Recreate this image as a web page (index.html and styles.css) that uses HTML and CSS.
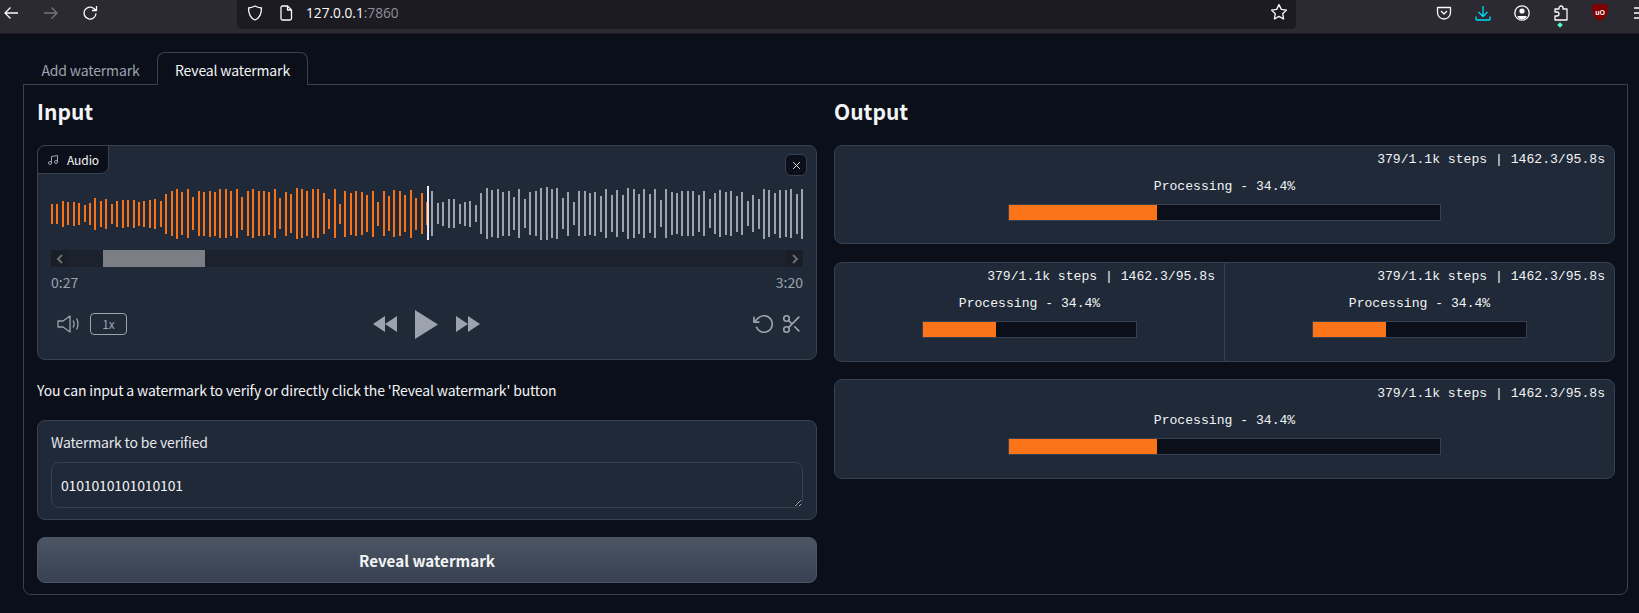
FILE: index.html
```html
<!DOCTYPE html>
<html lang="en">
<head>
<meta charset="utf-8">
<title>Watermark</title>
<link rel="stylesheet" href="styles.css">
</head>
<body>
<header class="toolbar">
  <svg class="tb-icon back" viewBox="0 0 16 16"><path d="M15 8H2M7.5 2.5 2 8l5.500 5.500"/></svg>
  <svg class="tb-icon forward" viewBox="0 0 16 16"><path d="M1 8h13M8.500 2.500 14 8l-5.500 5.500"/></svg>
  <svg class="tb-icon reload" viewBox="0 0 16 16"><path d="M14 8.500A6 6 0 1 1 11.500 3.200L14 5M14.500 1v4.500H10"/></svg>
  <div class="urlbar">
    <svg class="tb-icon shield" viewBox="0 0 16 16"><path d="M8 1c2 1.200 4 1.700 6.500 2 0 6-1.500 10-6.500 12C3 13 1.500 9 1.500 3 4 2.700 6 2.200 8 1z"/></svg>
    <svg class="tb-icon page" viewBox="0 0 16 16"><path d="M3 2.500A1.500 1.500 0 0 1 4.500 1h5L13.500 5v8.500A1.500 1.500 0 0 1 12 15H4.500A1.500 1.500 0 0 1 3 13.500z"/><path d="M9.500 1v4h4"/></svg>
    <span class="url">127.0.0.1<span class="url-port">:7860</span></span>
    <svg class="tb-icon star" viewBox="0 0 18 18"><path d="M9 1.500l2.300 4.900 5.200.7-3.800 3.600.9 5.300L9 13.400l-4.600 2.600.9-5.300L1.500 7.100l5.200-.7z"/></svg>
  </div>
  <div class="tb-actions">
    <svg class="tb-icon" viewBox="0 0 16 16"><path d="M1.500 2.500h13v5a6.500 6.500 0 0 1-13 0z"/><path d="M5 6l3 3 3-3"/></svg>
    <svg class="tb-icon download" viewBox="0 0 16 16"><path d="M8 1v10M3.500 7 8 11.500 12.500 7M1 11.500V14a1 1 0 0 0 1 1h12a1 1 0 0 0 1-1v-2.500"/></svg>
    <svg class="tb-icon" viewBox="0 0 16 16"><circle cx="8" cy="8" r="7.200"/><circle class="solid" cx="8" cy="6" r="2.600"/><path class="solid" d="M3.500 11h9v1.200a6 6 0 0 1-9 0z"/></svg>
    <div class="ext">
      <svg class="tb-icon" viewBox="0 0 16 16"><path d="M2 15v-4h2a2 2 0 0 0 0-4H2V4h4V3a2 2 0 0 1 4 0v1h4v11z"/></svg>
      <span class="ext-dot"></span>
    </div>
    <svg class="tb-icon ublock" viewBox="0 0 16 18"><path class="ub-shield" d="M8 0c2 1.200 4.500 2 8 2 0 8-1 13-8 16C1 15 0 10 0 2c3.500 0 6-.8 8-2z"/><text class="ub-text" x="8" y="11.500" text-anchor="middle">uO</text></svg>
    <svg class="tb-icon menu" viewBox="0 0 16 16"><path d="M1 3h14M1 8h14M1 13h14"/></svg>
  </div>
</header>

<main class="app">
  <nav class="tabs">
    <button class="tab">Add watermark</button>
    <button class="tab tab-active">Reveal watermark</button>
  </nav>
  <section class="panel">
    <div class="column">
      <h2 class="heading">Input</h2>
      <div class="audio card">
        <div class="audio-label">
          <svg class="music" viewBox="0 0 24 24"><path d="M9 18V5l12-2v13"/><circle cx="6" cy="18" r="3"/><circle cx="18" cy="16" r="3"/></svg>
          <span>Audio</span>
        </div>
        <button class="close" aria-label="Clear">
          <svg viewBox="0 0 12 12"><path d="M1.500 1.500l9 9M10.500 1.500l-9 9"/></svg>
        </button>
        <div class="waveform" id="waveform"></div>
        <div class="scrollbar">
          <span class="sb-btn"><svg viewBox="0 0 10 10"><path d="M7 1 3 5l4 4"/></svg></span>
          <span class="sb-gap"></span>
          <span class="sb-thumb"></span>
          <span class="sb-rest"></span>
          <span class="sb-btn"><svg viewBox="0 0 10 10"><path d="M3 1l4 4-4 4"/></svg></span>
        </div>
        <div class="times"><span>0:27</span><span>3:20</span></div>
        <div class="controls">
          <div class="ctl-left">
            <svg class="ic volume" viewBox="0 0 23 18"><path d="M1 6h5l7-5v16l-7-5H1z"/><path d="M16 5.500c1.300 2 1.300 5 0 7M19.500 3.500c2 3 2 8 0 11"/></svg>
            <span class="speed">1x</span>
          </div>
          <div class="ctl-mid">
            <svg class="fill rew" viewBox="0 0 24 16"><path d="M12 0v16L0 8zM24 0v16L12 8z"/></svg>
            <svg class="fill play" viewBox="0 0 23 29"><path d="M0 0l23 14.500L0 29z"/></svg>
            <svg class="fill rew" viewBox="0 0 24 16"><path d="M0 0v16l12-8zM12 0v16l12-8z"/></svg>
          </div>
          <div class="ctl-right">
            <svg class="ic undo" viewBox="0 0 24 24"><polyline points="1 4 1 10 7 10"/><path d="M3.510 15a9 9 0 1 0 2.130-9.360L1 10"/></svg>
            <svg class="ic scissors" viewBox="0 0 24 24"><circle cx="6" cy="6" r="3"/><circle cx="6" cy="18" r="3"/><path d="M20 4 8.120 15.880M14.470 14.480 20 20M8.120 8.120 12 12"/></svg>
          </div>
        </div>
      </div>
      <p class="note">You can input a watermark to verify or directly click the 'Reveal watermark' button</p>
      <label class="field card">
        <span class="field-label">Watermark to be verified</span>
        <textarea class="field-input">0101010101010101</textarea>
      </label>
      <button class="submit">Reveal watermark</button>
    </div>

    <div class="column">
      <h2 class="heading">Output</h2>
      <div class="outputs">
        <div class="card output">
          <div class="progress">
            <div class="eta">379/1.1k steps | 1462.3/95.8s</div>
            <div class="proc">Processing - 34.4%</div>
            <div class="bar"><div class="bar-fill"></div></div>
          </div>
        </div>
        <div class="card output">
          <div class="progress">
            <div class="eta">379/1.1k steps | 1462.3/95.8s</div>
            <div class="proc">Processing - 34.4%</div>
            <div class="bar"><div class="bar-fill"></div></div>
          </div>
          <div class="progress divided">
            <div class="eta">379/1.1k steps | 1462.3/95.8s</div>
            <div class="proc">Processing - 34.4%</div>
            <div class="bar"><div class="bar-fill"></div></div>
          </div>
        </div>
        <div class="card output">
          <div class="progress">
            <div class="eta">379/1.1k steps | 1462.3/95.8s</div>
            <div class="proc">Processing - 34.4%</div>
            <div class="bar"><div class="bar-fill"></div></div>
          </div>
        </div>
      </div>
    </div>
  </section>
</main>
<script src="waveform.js"></script>
</body>
</html>
```

FILE: styles.css
```css
* { box-sizing: border-box; }
html, body { height: 100%; }
body {
  margin: 0;
  background: #0b0f19;
  color: #f3f4f6;
  font-family: "Noto Sans CJK SC", "Noto Sans", sans-serif;
  font-size: 14px;
  overflow: hidden;
}
button { font: inherit; color: inherit; background: none; border: 0; padding: 0; }

/* browser chrome */
.toolbar {
  display: flex;
  height: 34px;
  padding-left: 3px;
  background: #2b2a33;
  border-bottom: 1px solid #1c1b22;
  align-items: flex-start;
}
.tb-icon {
  width: 16px;
  height: 16px;
  margin-top: 5px;
  flex: none;
  fill: none;
  stroke: #fbfbfe;
  stroke-width: 1.300;
  stroke-linejoin: round;
}
.forward { margin-left: 24px; stroke: #75747c; }
.reload { margin-left: 23px; }
.urlbar {
  display: flex;
  flex: none;
  align-items: flex-start;
  width: 1059px;
  height: 29px;
  margin-left: 139px;
  padding-left: 10px;
  padding-right: 8px;
  background: #1c1b22;
  border-radius: 0 0 5px 5px;
}
.page { margin-left: 15px; }
.url {
  margin-left: 12px;
  margin-top: 3px;
  font: 13.700px/20px "Open Sans", sans-serif;
  color: #fbfbfe;
}
.url-port { color: #8f8f9d; }
.star { width: 18px; height: 18px; margin-left: auto; margin-top: 3px; }
.tb-actions { display: flex; gap: 23px; margin-left: 140px; flex: none; }
.download { stroke: #00ddff; }
.solid { fill: #fbfbfe; stroke: none; }
.ext { position: relative; }
.ext-dot {
  position: absolute;
  left: 5px;
  top: 23px;
  width: 4px;
  height: 4px;
  background: #54ffbd;
  transform: rotate(45deg);
}
.ublock { margin-top: 3px; height: 18px; }
.ub-shield { fill: #800000; stroke: none; }
.ub-text { fill: #fff; stroke: none; font: bold 7px "Liberation Sans", sans-serif; }
.menu { margin-left: 2px; }

/* app */
.app { padding: 18px 11px 0 23px; }
.tabs { display: flex; height: 33px; padding-left: 1px; margin-bottom: -1px; }
.tab {
  width: 133px;
  height: 33px;
  padding-top: 2px;
  font-size: 14px;
  letter-spacing: -0.150px;
  color: #9ca3af;
}
.tab-active {
  position: relative;
  width: 151px;
  color: #f3f4f6;
  background: #0b0f19;
  border: 1px solid #374151;
  border-bottom: 0;
  border-radius: 8px 8px 0 0;
}
.panel {
  display: grid;
  grid-template-columns: 780px 781px;
  gap: 17px;
  height: 511px;
  padding: 0 12px 0 13px;
  border: 1px solid #374151;
  border-radius: 0 0 8px 8px;
}
.column { display: flex; flex-direction: column; min-width: 0; }
.heading {
  height: 60px;
  margin: 0;
  padding-top: 8px;
  font-size: 21px;
  line-height: 36px;
  font-weight: 600;
}
.card {
  background: #1f2937;
  border: 1px solid #374151;
  border-radius: 8px;
}

/* audio */
.audio {
  position: relative;
  height: 215px;
  padding: 40px 13px 0;
}
.audio-label {
  position: absolute;
  left: -1px;
  top: -1px;
  display: flex;
  align-items: center;
  gap: 8px;
  height: 29px;
  width: 72px;
  padding-left: 9px;
  font-size: 12px;
  letter-spacing: -0.100px;
  background: #0b0f19;
  border: 1px solid #374151;
  border-radius: 8px 0 8px 0;
}
.music { width: 12px; height: 12px; fill: none; stroke: #9ca3af; stroke-width: 2; }
.close {
  position: absolute;
  right: 9px;
  top: 8px;
  display: flex;
  align-items: center;
  justify-content: center;
  width: 22px;
  height: 22px;
  background: #0b0f19;
  border: 1px solid #374151;
  border-radius: 6px;
}
.close svg { width: 9px; height: 9px; fill: none; stroke: #f3f4f6; stroke-width: 1.200; }
.waveform { height: 55px; }
.waveform svg { display: block; width: 752px; height: 55px; }
.bar-played { fill: #f97316; }
.bar-rest { fill: #9ca3af; }
.bar-cursor { fill: #e9e6f5; }
.scrollbar {
  display: flex;
  height: 17px;
  margin-top: 9px;
  background: #1c222d;
}
.sb-btn {
  display: flex;
  align-items: center;
  justify-content: center;
  width: 17px;
  background: #1a1e27;
}
.sb-btn svg { width: 10px; height: 10px; fill: none; stroke: #6b6e74; stroke-width: 2; }
.sb-gap { width: 35px; }
.sb-thumb { width: 102px; background: #7b7f85; }
.sb-rest { flex: 1; }
.times {
  display: flex;
  justify-content: space-between;
  margin-top: 5px;
  font-size: 14px;
  line-height: 20px;
  color: #9ca3af;
}
.controls {
  display: grid;
  grid-template-columns: 1fr auto 1fr;
  align-items: center;
  height: 30px;
  margin-top: 17px;
}
.ctl-left { display: flex; align-items: center; gap: 10px; padding-left: 6px; }
.ctl-mid { display: flex; align-items: center; gap: 18px; margin-left: -2px; }
.ctl-right { display: flex; align-items: center; justify-content: flex-end; gap: 6px; }
.ic { fill: none; stroke: #9ca3af; stroke-width: 1.300; stroke-linejoin: round; }
.volume { width: 23px; height: 18px; }
.speed {
  width: 37px;
  height: 22px;
  border: 1px solid #9ca3af;
  border-radius: 4px;
  font-size: 12px;
  line-height: 20px;
  text-align: center;
  color: #9ca3af;
}
.fill { fill: #9ca3af; }
.rew { width: 24px; height: 16px; }
.play { width: 23px; height: 29px; }
.undo { width: 22px; height: 22px; stroke-width: 1.800; }
.scissors { width: 22px; height: 22px; stroke-width: 1.800; }

.note {
  height: 60px;
  margin: 0;
  font-size: 14px;
  letter-spacing: -0.150px;
  line-height: 60px;
}
.field {
  display: flex;
  flex-direction: column;
  height: 100px;
  padding: 12px 13px 0;
}
.field-label { font-size: 14px; letter-spacing: -0.150px; line-height: 19px; color: #e5e7eb; }
.field-input {
  display: block;
  width: 100%;
  height: 46px;
  margin-top: 10px;
  padding: 10px 9px;
  font: 14px/24px "Noto Sans CJK SC", "Noto Sans", sans-serif;
  letter-spacing: -0.150px;
  color: #f3f4f6;
  background: #1f2937;
  border: 1px solid #374151;
  border-radius: 8px;
  outline: 0;
}
.submit {
  height: 46px;
  margin-top: 17px;
  font-size: 15.200px;
  font-weight: 600;
  color: #f3f4f6;
  background: linear-gradient(to bottom, #4b5563, #374151);
  border: 1px solid #4b5563;
  border-radius: 8px;
}

/* outputs */
.outputs { display: flex; flex-direction: column; gap: 17px; }
.output { display: flex; height: 100px; }
.output:first-child { height: 99px; margin-bottom: 1px; }
.progress {
  flex: 1;
  display: flex;
  flex-direction: column;
  align-items: center;
  font: 13.100px/18px "Liberation Mono", monospace;
  color: #f3f4f6;
}
.divided { border-left: 1px solid #374151; }
.eta { align-self: flex-end; margin-top: 5px; padding-right: 9px; }
.proc { margin-top: 9px; }
.bar {
  width: 55.500%;
  height: 17px;
  margin-top: 8px;
  background: #0b0f19;
  border: 1px solid #374151;
}
.bar-fill { width: 34.400%; height: 100%; background: #fb7518; }
```

FILE: waveform.js
```js
var played = [60,60,78,68,72,66,52,66,95,78,90,60,78,84,80,84,72,78,84,90,78,120,135,150,130,146,100,136,132,138,132,146,146,136,146,100,134,146,134,136,130,146,94,132,116,154,148,134,146,146,124,90,146,60,138,126,136,130,112,138,72,136,104,140,134,112,144,96,124,70];
var rest = [136,64,72,88,88,60,72,78,52,124,154,140,146,132,136,100,146,88,130,136,156,160,146,152,94,132,70,136,136,126,132,108,146,110,142,110,152,146,120,146,116,146,80,146,128,124,136,136,136,110,134,86,124,142,130,136,108,130,74,110,90,150,140,124,144,140,146,120,150];
var NS = "http://www.w3.org/2000/svg";
var svg = document.createElementNS(NS, "svg");
svg.setAttribute("viewBox", "0 0 752 55");
var all = played.concat(rest);
var step = 750 / (all.length - 1);

function addRect(x, y, w, h, cls) {
  var r = document.createElementNS(NS, "rect");
  r.setAttribute("x", x);
  r.setAttribute("y", y);
  r.setAttribute("width", w);
  r.setAttribute("height", h);
  r.setAttribute("class", cls);
  svg.appendChild(r);
}

all.forEach(function (v, i) {
  var h = Math.round(v / 3);
  addRect(Math.round(i * step), Math.round(27.5 - h / 2), 2, h, i < played.length ? "bar-played" : "bar-rest");
});
addRect(376, 0, 2, 54, "bar-cursor");
document.getElementById("waveform").appendChild(svg);
```
